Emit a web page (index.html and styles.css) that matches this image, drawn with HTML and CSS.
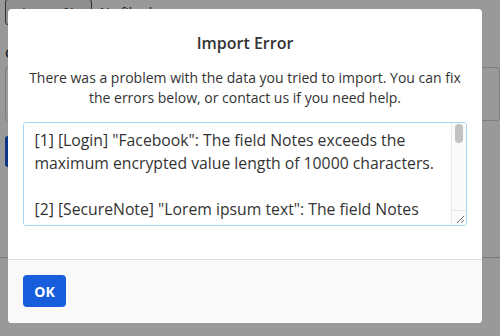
FILE: index.html
```html
<!DOCTYPE html>
<html>
<head>
<meta charset="utf-8">
<link rel="stylesheet" href="styles.css">
</head>
<body>
<div class="page">
  <div class="file-row">
    <span class="file-btn">Choose file</span>
    <span class="file-name">No file chosen</span>
  </div>
  <div class="page-label">Or copy/paste</div>
  <div class="page-textarea"></div>
  <div class="page-btn">Import data</div>
  <div class="page-rule"></div>
</div>
<div class="overlay">
  <div class="modal" role="dialog">
    <div class="modal-body">
      <h1 class="modal-title">Import Error</h1>
      <p class="modal-desc">There was a problem with the data you tried to import. You can fix the errors below, or contact us if you need help.</p>
      <div class="errors-box">
        <textarea class="errors" readonly>[1] [Login] "Facebook": The field Notes exceeds the maximum encrypted value length of 10000 characters.

[2] [SecureNote] "Lorem ipsum text": The field Notes exceeds the maximum encrypted value length of 10000 characters.

[3] [Login] "Twitter": The field Notes exceeds the maximum encrypted value length of 10000 characters.

[4] [SecureNote] "Dolor sit amet": The field Notes exceeds the maximum encrypted value length of 10000 characters.</textarea>
        <div class="vscroll" aria-hidden="true">
          <div class="thumb"></div>
          <div class="corner">
            <svg width="14" height="14" viewBox="0 0 14 14">
              <line x1="5" y1="12" x2="12" y2="5" stroke="#6b6b6b" stroke-width="1"/>
              <line x1="9" y1="12" x2="12" y2="9" stroke="#6b6b6b" stroke-width="1"/>
            </svg>
          </div>
        </div>
      </div>
    </div>
    <div class="modal-footer">
      <button class="btn-ok" type="button">OK</button>
    </div>
  </div>
</div>
</body>
</html>
```
FILE: styles.css
```css
html, body {
  margin: 0;
  padding: 0;
  width: 500px;
  height: 336px;
  overflow: hidden;
  background: #ffffff;
  font-family: "Open Sans", "DejaVu Sans", sans-serif;
  color: #333333;
}

.page {
  padding: 0 0 0 5px;
  display: flex;
  flex-direction: column;
}

.file-row {
  display: flex;
  align-items: center;
  height: 25px;
  margin-top: -1px;
  font-size: 13px;
}

.file-btn {
  box-sizing: border-box;
  width: 87px;
  height: 26px;
  border: 1px solid #555;
  border-radius: 3px;
  background: #efefef;
  padding: 4px 8px;
  color: #222;
}

.file-name {
  margin-left: 8px;
  color: #222;
}

.page-label {
  margin-top: 20px;
  font-size: 13px;
  font-weight: 600;
  height: 18px;
}

.page-textarea {
  margin-top: 5px;
  height: 52px;
  border: 1px solid #ced4da;
  border-radius: 3px;
}

.page-btn {
  margin-top: 15px;
  height: 31px;
  width: 100px;
  background: #175ddc;
  color: #fff;
  border-radius: 3px;
  font-size: 13px;
  line-height: 31px;
  padding-left: 12px;
}

.page-rule {
  margin-top: 90px;
  height: 1px;
  background: #cccccc;
  margin-left: -5px;
}

.overlay {
  position: absolute;
  inset: 0;
  background: rgba(0, 0, 0, 0.4);
  display: flex;
  justify-content: flex-start;
  align-items: flex-start;
  padding: 9px 0 0 8px;
}

.modal {
  width: 474px;
  height: 314px;
  background: #ffffff;
  border-radius: 4px;
  display: flex;
  flex-direction: column;
  overflow: hidden;
}

.modal-body {
  padding: 24px 15px 0 15px;
  display: flex;
  flex-direction: column;
  flex: 1;
}

.modal-title {
  margin: 0;
  font-size: 16px;
  font-weight: 600;
  line-height: 20px;
  text-align: center;
  color: #333333;
}

.modal-desc {
  margin: 15px 0 0 0;
  font-size: 14px;
  line-height: 19.5px;
  text-align: center;
  color: #333333;
}

.errors-box {
  box-sizing: border-box;
  margin: 15px 0 0 0;
  width: 444px;
  height: 104px;
  border: 1px solid #a6d6f4;
  border-radius: 3px;
  display: flex;
  overflow: hidden;
  background: #ffffff;
}

.errors {
  flex: 1;
  box-sizing: border-box;
  height: 100%;
  margin: 0;
  border: 0;
  padding: 5.5px 10.5px;
  font-family: "Open Sans", "DejaVu Sans", sans-serif;
  font-size: 15.75px;
  line-height: 23.2px;
  color: #333333;
  background: #ffffff;
  overflow: hidden;
  resize: none;
  outline: none;
}

.vscroll {
  width: 15px;
  flex: none;
  box-sizing: border-box;
  background: #fafafa;
  border-left: 1px solid #e8e8e8;
  display: flex;
  flex-direction: column;
}

.thumb {
  width: 8px;
  height: 19px;
  margin: 1px 0 0 3px;
  border-radius: 4px;
  background: #c2c2c2;
}

.corner {
  margin-top: auto;
  height: 15px;
  box-sizing: border-box;
  border-top: 1px solid #e8e8e8;
  display: flex;
  align-items: flex-end;
  justify-content: flex-end;
}

.corner svg {
  display: block;
}

.modal-footer {
  border-top: 1px solid #dddddd;
  background: #f9f9f9;
  padding: 15px 15px 0 15px;
  box-sizing: border-box;
  height: 64px;
}

.btn-ok {
  height: 32px;
  width: 43px;
  padding: 0;
  border: 0;
  border-radius: 4px;
  background: #175ddc;
  color: #ffffff;
  font-family: "Open Sans", "DejaVu Sans", sans-serif;
  font-size: 14px;
  font-weight: 700;
  cursor: pointer;
}
```
